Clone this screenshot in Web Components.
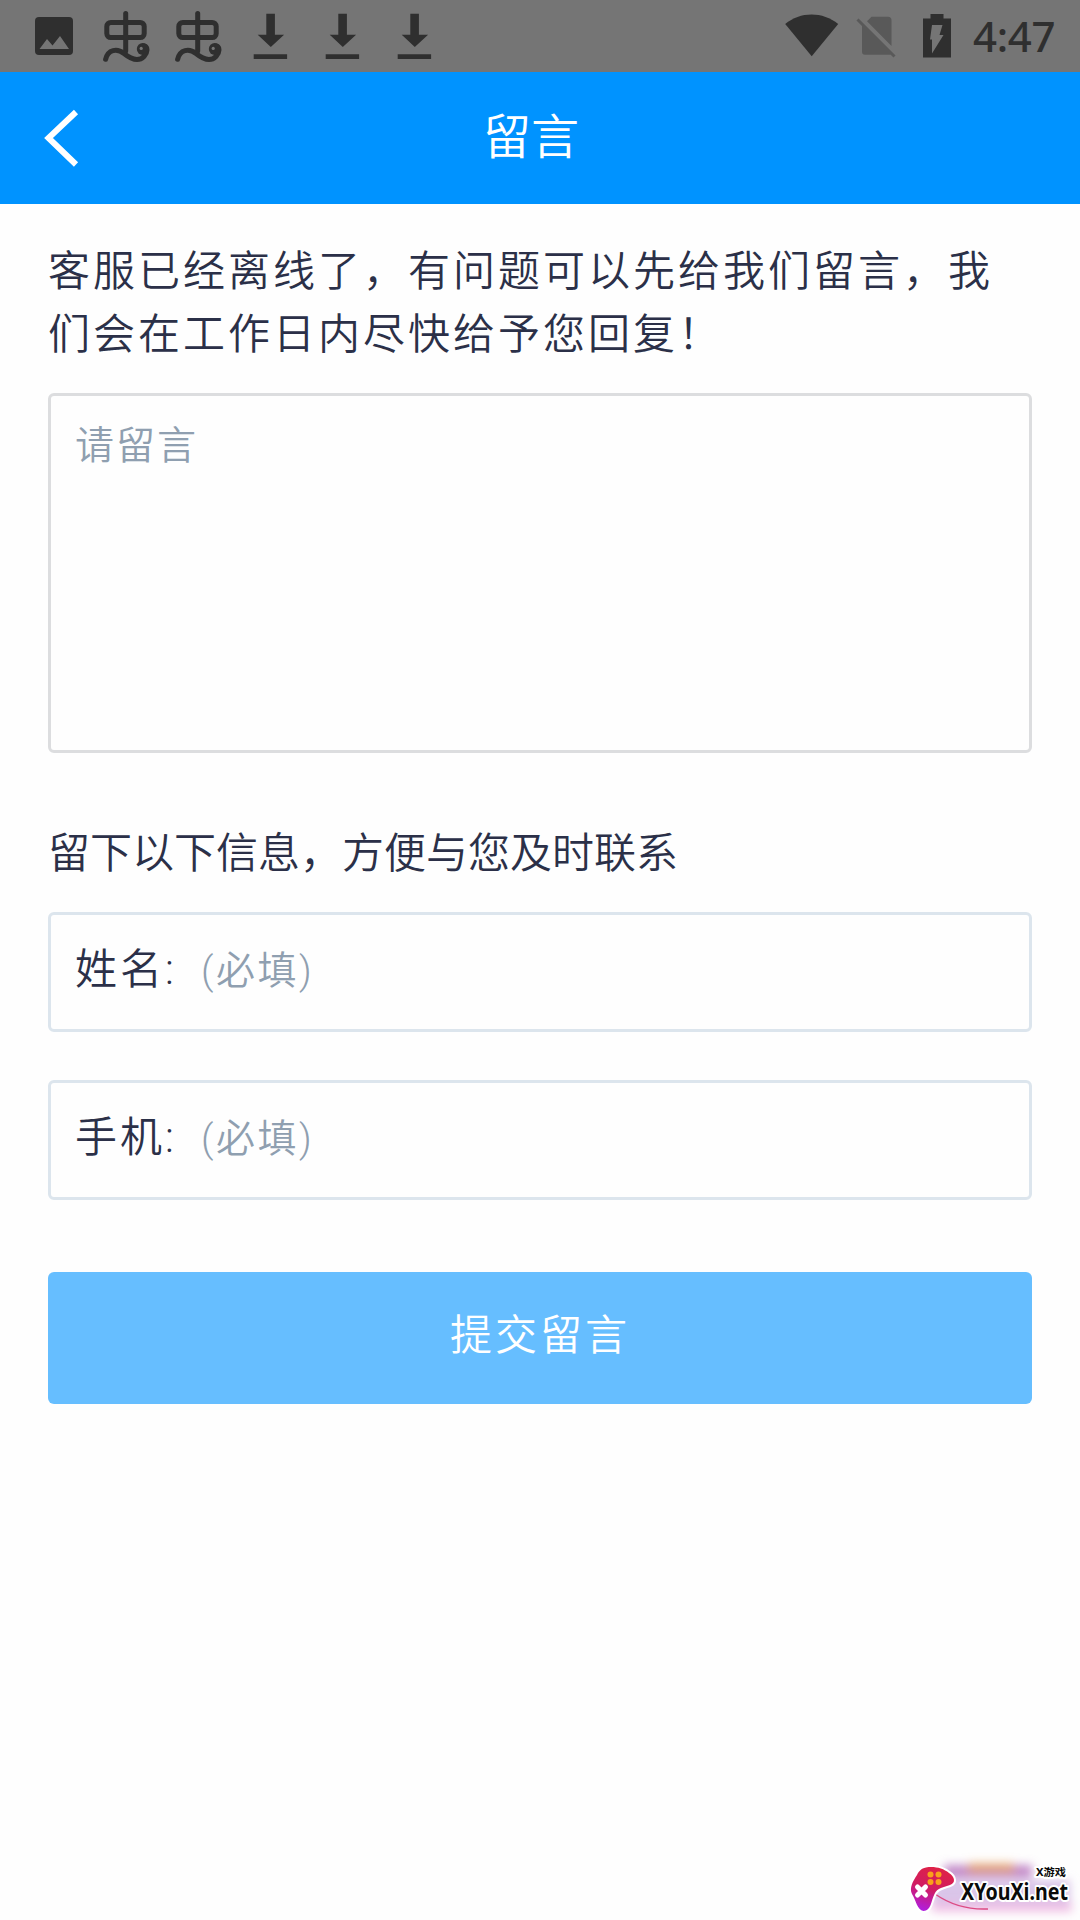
<!DOCTYPE html>
<html lang="zh-CN">
<head>
<meta charset="utf-8">
<title>留言</title>
<style>
  body {
    margin: 0;
    background: #fefefe;
    font-family: "Noto Sans CJK SC", sans-serif;
    font-weight: 350;
    color: #2b3048;
  }
</style>
</head>
<body>
<message-page>
  <status-bar slot="top" time="4:47"></status-bar>
  <nav-bar slot="top">留言</nav-bar>
  <intro-text>客服已经离线了，有问题可以先给我们留言，我们会在工作日内尽快给予您回复！</intro-text>
  <message-box placeholder="请留言"></message-box>
  <form-caption>留下以下信息，方便与您及时联系</form-caption>
  <form-field label="姓名:" hint="(必填)"></form-field>
  <form-field label="手机:" hint="(必填)"></form-field>
  <submit-button>提交留言</submit-button>
  <site-mark slot="bottom"></site-mark>
</message-page>

<script>
const ICONS = {
  image: `<rect x="17" y="17" width="38" height="38" rx="4" fill="#2f2f2f"/>
    <path fill="#757575" d="M21.5 49l7.5-10 5.5 6.5L42 36l9 13z"/>`,
  bug: `<g fill="none" stroke="#2f2f2f" stroke-width="5" stroke-linecap="round" stroke-linejoin="round">
      <rect x="16.8" y="22.4" width="37.4" height="15.2" rx="4"/>
      <path d="M35.7 13.5V51"/>
      <path d="M15.6 59.3C18 49.5 27 48 34 53.5C42 60 49 61.5 54 56.5C58 52 58 47 54 46"/>
    </g>
    <circle cx="52.8" cy="49" r="6" fill="#2f2f2f"/>
    <circle cx="51.2" cy="48.4" r="1.6" fill="#777"/>`,
  download: `<path fill="#2f2f2f" d="M32.3 13.7h8.6v21h9.2L36.8 47 23.7 34.7h8.6zM19.7 54.2h33.4v4.8H19.7z"/>`,
};

class StatusIcon extends HTMLElement {
  constructor() {
    super();
    this.attachShadow({ mode: "open" });
  }

  connectedCallback() {
    this.shadowRoot.innerHTML = `
      <style>
        :host { display: block; width: 72px; height: 72px; }
        svg { display: block; }
      </style>
      <svg width="72" height="72" viewBox="0 0 72 72">${ICONS[this.getAttribute("name")]}</svg>
    `;
  }
}
customElements.define("status-icon", StatusIcon);

class StatusBar extends HTMLElement {
  constructor() {
    super();
    this.attachShadow({ mode: "open" });
    this.shadowRoot.innerHTML = `
      <style>
        :host {
          display: flex;
          justify-content: space-between;
          height: 72px;
          padding: 0 25px 0 18px;
          box-sizing: border-box;
          background: #757575;
        }
        .icons, .system { display: flex; }
        .time {
          font: 500 42px/72px "Noto Sans", sans-serif;
          letter-spacing: -0.3px;
          color: #2f2f2f;
          width: 82px;
          margin-left: 11px;
        }
        svg { display: block; }
      </style>
      <div class="icons">
        <status-icon name="image"></status-icon>
        <status-icon name="bug"></status-icon>
        <status-icon name="bug"></status-icon>
        <status-icon name="download"></status-icon>
        <status-icon name="download"></status-icon>
        <status-icon name="download"></status-icon>
      </div>
      <div class="system">
        <svg width="182" height="72" viewBox="780 0 182 72">
          <path fill="#2f2f2f" d="M785.2 24C800 11.2 823 11.2 838.2 24L811.7 56.2z"/>
          <path fill="#595959" d="M871.5 16.7H888a3.5 3.5 0 0 1 3.5 3.5V46L867 21.2zM862 24.5L891.5 54a3 3 0 0 1-2 .7H865a3 3 0 0 1-3-3z"/>
          <path stroke="#595959" stroke-width="3" d="M857.5 19.5L894.5 56.5"/>
          <path fill="#2f2f2f" d="M930.5 14h13v4.500h7.500v39h-28v-39h7.500z"/>
          <path fill="#757575" d="M932 25h10.500l-3 10h4L932 53.500V39.500h-2z"/>
        </svg>
        <div class="time"></div>
      </div>
    `;
  }

  connectedCallback() {
    this.shadowRoot.querySelector(".time").textContent = this.getAttribute("time");
  }
}
customElements.define("status-bar", StatusBar);

class NavBar extends HTMLElement {
  constructor() {
    super();
    this.attachShadow({ mode: "open" });
    this.shadowRoot.innerHTML = `
      <style>
        :host {
          display: grid;
          grid-template-columns: 80px 1fr 98px;
          height: 132px;
          background: #0093ff;
          color: #fff;
        }
        svg { display: block; }
        .title {
          font-size: 48px;
          line-height: 122px;
          text-align: center;
        }
      </style>
      <svg width="80" height="132" viewBox="0 0 80 132">
        <path d="M76 40L48.5 66L76 92.5" fill="none" stroke="#fff" stroke-width="6"/>
      </svg>
      <div class="title"><slot></slot></div>
    `;
  }
}
customElements.define("nav-bar", NavBar);

class IntroText extends HTMLElement {
  constructor() {
    super();
    this.attachShadow({ mode: "open" });
    this.shadowRoot.innerHTML = `
      <style>
        :host {
          display: block;
          height: 157px;
          font-size: 42px;
          line-height: 63px;
          letter-spacing: 3px;
        }
      </style>
      <slot></slot>
    `;
  }
}
customElements.define("intro-text", IntroText);

class MessageBox extends HTMLElement {
  constructor() {
    super();
    this.attachShadow({ mode: "open" });
    this.shadowRoot.innerHTML = `
      <style>
        :host {
          display: block;
          height: 360px;
          box-sizing: border-box;
          border: 3px solid #dcdddf;
          border-radius: 6px;
          padding: 18px 24px;
          font-size: 39px;
          line-height: 56px;
          letter-spacing: 2px;
          color: #8f9fb0;
        }
      </style>
      <div class="placeholder"></div>
    `;
  }

  connectedCallback() {
    this.shadowRoot.querySelector(".placeholder").textContent = this.getAttribute("placeholder");
  }
}
customElements.define("message-box", MessageBox);

class FormCaption extends HTMLElement {
  constructor() {
    super();
    this.attachShadow({ mode: "open" });
    this.shadowRoot.innerHTML = `
      <style>
        :host {
          display: block;
          margin-top: 65px;
          height: 94px;
          font-size: 42px;
          line-height: 63px;
        }
      </style>
      <slot></slot>
    `;
  }
}
customElements.define("form-caption", FormCaption);

class FormField extends HTMLElement {
  constructor() {
    super();
    this.attachShadow({ mode: "open" });
    this.shadowRoot.innerHTML = `
      <style>
        :host {
          display: flex;
          height: 120px;
          margin-bottom: 48px;
          box-sizing: border-box;
          border: 3px solid #dce5ed;
          border-radius: 6px;
          padding: 0 24px;
          font-family: Roboto, "Noto Sans CJK SC", sans-serif;
          line-height: 110px;
          letter-spacing: 3px;
        }
        .label { width: 126px; font-size: 42px; }
        .hint { font-size: 39px; line-height: 112px; letter-spacing: 2.5px; color: #8f9fb0; }
      </style>
      <div class="label"></div>
      <div class="hint"></div>
    `;
  }

  connectedCallback() {
    this.shadowRoot.querySelector(".label").textContent = this.getAttribute("label");
    this.shadowRoot.querySelector(".hint").textContent = this.getAttribute("hint");
  }
}
customElements.define("form-field", FormField);

class SubmitButton extends HTMLElement {
  constructor() {
    super();
    this.attachShadow({ mode: "open" });
    this.shadowRoot.innerHTML = `
      <style>
        :host {
          display: block;
          height: 132px;
          margin-top: 72px;
          border-radius: 6px;
          background: #66beff;
          color: #fff;
          font-size: 42px;
          line-height: 120px;
          letter-spacing: 3px;
          text-align: center;
        }
      </style>
      <slot></slot>
    `;
  }
}
customElements.define("submit-button", SubmitButton);

class SiteMark extends HTMLElement {
  constructor() {
    super();
    this.attachShadow({ mode: "open" });
    this.shadowRoot.innerHTML = `
      <style>
        :host { display: block; width: 190px; height: 70px; }
        svg { display: block; overflow: visible; }
        text {
          font-family: "Noto Sans", "Noto Sans CJK SC", sans-serif;
          font-weight: 700;
          fill: #0a0a0a;
          stroke: #fff;
          stroke-width: 4px;
          stroke-linejoin: round;
          paint-order: stroke;
        }
      </style>
      <svg width="190" height="70" viewBox="0 0 190 70">
        <defs>
          <linearGradient id="pad" x1="0.6" y1="0" x2="0.3" y2="1">
            <stop offset="0" stop-color="#df2246"/>
            <stop offset="0.5" stop-color="#d01c62"/>
            <stop offset="1" stop-color="#b01ee0"/>
          </linearGradient>
          <filter id="soft" x="-30%" y="-60%" width="160%" height="220%"><feGaussianBlur stdDeviation="5"/></filter>
        </defs>
        <g filter="url(#soft)">
          <rect x="54" y="15" width="88" height="13" fill="#b877c0" opacity="0.85"/>
          <rect x="78" y="13" width="46" height="10" fill="#eba85c" opacity="0.7"/>
          <rect x="42" y="30" width="138" height="26" fill="#cdb2e2" opacity="0.75"/>
          <rect x="42" y="53" width="140" height="9" fill="#efb4e0" opacity="0.8"/>
        </g>
        <path d="M45 44C58 53 76 60 98 59" fill="none" stroke="#dc4b84" stroke-width="1.5"/>
        <path d="M36 17.500C44 16 53 18 59 23C65 27 66 33 60 35C54 37 47 38 44.500 44C41 51 41 61 33.500 61C27 60 26 50 22 44C19 38 23 31 27 25C29 21 31 18.500 36 17.500z" fill="url(#pad)" stroke="#fff" stroke-width="4" paint-order="stroke"/>
        <g fill="#f9a11b">
          <circle cx="40.5" cy="24.5" r="3"/><circle cx="48.5" cy="24.5" r="3"/>
          <circle cx="40.5" cy="32" r="3"/><circle cx="48.5" cy="32" r="3"/>
        </g>
        <path d="M27.500 37L35.500 45M35.500 37L27.500 45" stroke="#fff" stroke-width="5" stroke-linecap="round"/>
        <text x="146" y="26" font-size="10.5" textLength="30" lengthAdjust="spacingAndGlyphs">X游戏</text>
        <text x="71" y="50" font-size="24" textLength="107" lengthAdjust="spacingAndGlyphs">XYouXi.net</text>
      </svg>
    `;
  }
}
customElements.define("site-mark", SiteMark);

class MessagePage extends HTMLElement {
  constructor() {
    super();
    this.attachShadow({ mode: "open" });
    this.shadowRoot.innerHTML = `
      <style>
        :host {
          display: flex;
          flex-direction: column;
          width: 1080px;
          height: 1920px;
          overflow: hidden;
        }
        main { padding: 32px 48px 0; }
        footer {
          display: flex;
          justify-content: flex-end;
          margin-top: auto;
        }
      </style>
      <slot name="top"></slot>
      <main><slot></slot></main>
      <footer><slot name="bottom"></slot></footer>
    `;
  }
}
customElements.define("message-page", MessagePage);
</script>
</body>
</html>
